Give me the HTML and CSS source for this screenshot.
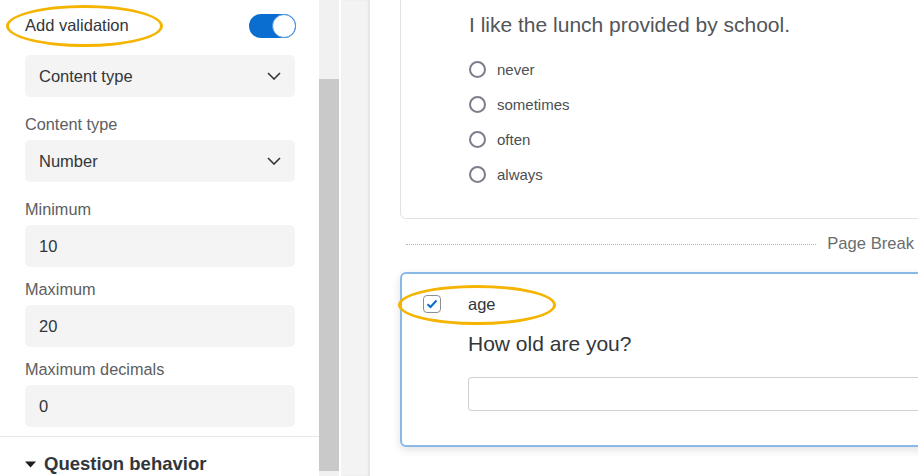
FILE: index.html
```html
<!DOCTYPE html>
<html>
<head>
<meta charset="utf-8">
<link rel="stylesheet" href="styles.css">
</head>
<body>
<div class="app">
  <aside class="sidebar">
    <div class="toggle-row">
      <span class="toggle-label">Add validation</span>
      <span class="toggle"><span class="knob"></span></span>
    </div>
    <div class="field select first">
      <span>Content type</span>
      <svg class="chev" width="14" height="8" viewBox="0 0 14 8"><path d="M1 1l6 6 6-6" fill="none" stroke="#32363a" stroke-width="1.6"/></svg>
    </div>
    <div class="label after-select">Content type</div>
    <div class="field select">
      <span>Number</span>
      <svg class="chev" width="14" height="8" viewBox="0 0 14 8"><path d="M1 1l6 6 6-6" fill="none" stroke="#32363a" stroke-width="1.6"/></svg>
    </div>
    <div class="label after-select">Minimum</div>
    <div class="field">10</div>
    <div class="label">Maximum</div>
    <div class="field">20</div>
    <div class="label">Maximum decimals</div>
    <div class="field">0</div>
    <div class="divider"></div>
    <div class="section">
      <svg width="11" height="7" viewBox="0 0 11 7"><path d="M0 0.5h11L5.5 6.5z" fill="#1d1d1d"/></svg>
      <span>Question behavior</span>
    </div>
  </aside>
  <div class="scrollbar"><div class="thumb"></div></div>
  <div class="gutter"></div>
  <main class="main">
    <section class="card">
      <div class="qtext">I like the lunch provided by school.</div>
      <ul class="options">
        <li><span class="radio"></span>never</li>
        <li><span class="radio"></span>sometimes</li>
        <li><span class="radio"></span>often</li>
        <li><span class="radio"></span>always</li>
      </ul>
    </section>
    <div class="pagebreak"><span class="dots"></span><span class="pb-text">Page Break</span></div>
    <section class="card active">
      <div class="qhead">
        <span class="check"><svg width="12" height="10" viewBox="0 0 12 10"><path d="M1.5 5.2l3 2.8 6-6.5" fill="none" stroke="#0a6ed1" stroke-width="2"/></svg></span>
        <span class="qid">age</span>
      </div>
      <div class="qtext2">How old are you?</div>
      <div class="textinput"></div>
    </section>
  </main>
</div>
<div class="hl hl-1"></div>
<div class="hl hl-2"></div>
</body>
</html>
```
FILE: styles.css
```css
html, body {
  margin: 0;
  padding: 0;
  width: 918px;
  height: 476px;
  overflow: hidden;
  background: #fff;
  font-family: "Liberation Sans", Arial, sans-serif;
  color: #32363a;
}
.app {
  display: flex;
  height: 476px;
  position: relative;
}
.sidebar {
  width: 319px;
  flex: none;
  display: flex;
  flex-direction: column;
}
.toggle-row {
  display: flex;
  align-items: center;
  justify-content: space-between;
  height: 50px;
  padding: 1px 23px 0 25px;
  box-sizing: border-box;
}
.toggle-label {
  font-size: 16.5px;
  color: #32363a;
}
.toggle {
  width: 47px;
  height: 24px;
  border-radius: 12px;
  background: #0a6ed1;
  display: flex;
  justify-content: flex-end;
  align-items: center;
  box-sizing: border-box;
}
.knob {
  width: 24px;
  height: 24px;
  border-radius: 50%;
  background: #fff;
  box-sizing: border-box;
  border: 1.5px solid #4a90e2;
}
.field {
  margin: 7px 24px 0 25px;
  height: 42px;
  border-radius: 5px;
  background: #f4f4f4;
  display: flex;
  align-items: center;
  justify-content: space-between;
  padding: 0 14px 0 14px;
  font-size: 16.5px;
  color: #32363a;
}
.field.first {
  margin-top: 5px;
}
.chev {
  display: block;
}
.label {
  margin: 13px 0 0 25px;
  height: 18px;
  line-height: 18px;
  font-size: 16.3px;
  color: #5b5e62;
}
.label.after-select {
  margin-top: 18px;
}
.divider {
  margin-top: 9px;
  height: 1px;
  background: #e7e7e7;
}
.section {
  display: flex;
  align-items: center;
  gap: 8px;
  padding: 16px 0 0 25px;
  font-size: 18.5px;
  font-weight: bold;
  color: #32363a;
}
.scrollbar {
  width: 20px;
  flex: none;
  background: #f1f1f1;
  display: flex;
  flex-direction: column;
}
.thumb {
  margin-top: 79px;
  height: 392px;
  background: #c9c9c9;
}
.gutter {
  width: 29px;
  flex: none;
  margin-left: 2px;
  background: #f3f3f3;
  box-shadow: inset -2px 0 2px rgba(0,0,0,0.06);
}
.main {
  flex: none;
  width: 560px;
  box-sizing: border-box;
  padding-left: 30px;
  display: flex;
  flex-direction: column;
}
.card {
  border: 1px solid #e2e2e2;
  border-radius: 6px;
  background: #fff;
  margin-top: -20px;
  padding: 29px 0 0 68px;
  height: 239px;
  box-sizing: border-box;
  margin-right: -20px;
  flex: none;
}
.qtext {
  font-size: 21px;
  color: #525559;
  height: 30px;
  line-height: 30px;
}
.options {
  list-style: none;
  margin: 12px 0 0 0;
  padding: 0;
}
.options li {
  display: flex;
  align-items: center;
  height: 35px;
  font-size: 15px;
  color: #4c4f53;
}
.radio {
  width: 17px;
  height: 17px;
  border-radius: 50%;
  border: 2px solid #7c7d8a;
  box-sizing: border-box;
  margin-right: 11px;
}
.pagebreak {
  display: flex;
  align-items: center;
  height: 50px;
  padding: 0 16px 0 6px;
  gap: 11px;
  flex: none;
}
.dots {
  flex: 1;
  border-top: 1px dotted #b5b5b5;
}
.pb-text {
  font-size: 16.6px;
  color: #6a6d70;
}
.card.active {
  margin-top: 3px;
  border: 2px solid #8ab9e8;
  border-radius: 6px;
  height: 175px;
  padding: 18px 0 0 21px;
  box-shadow: 0 3px 8px rgba(0,0,0,0.12);
}
.qhead {
  display: flex;
  align-items: center;
  height: 24px;
}
.check {
  width: 18px;
  height: 18px;
  border: 1px solid #8c9096;
  border-radius: 4px;
  box-sizing: border-box;
  display: flex;
  align-items: center;
  justify-content: center;
}
.qid {
  margin-left: 27px;
  font-size: 16.5px;
  color: #32363a;
}
.qtext2 {
  margin: 13px 0 0 45px;
  font-size: 21px;
  color: #32363a;
  height: 30px;
  line-height: 30px;
}
.textinput {
  margin: 18px 0 0 45px;
  height: 34px;
  border: 1px solid #d0d0d0;
  border-radius: 3px;
  box-sizing: border-box;
}
.hl {
  position: absolute;
  border: 3px solid #f4b400;
  border-radius: 50%;
  box-sizing: border-box;
  pointer-events: none;
}
.hl-1 { left: 6px; top: 5px; width: 157px; height: 42px; }
.hl-2 { left: 398px; top: 285px; width: 158px; height: 40px; }
```
